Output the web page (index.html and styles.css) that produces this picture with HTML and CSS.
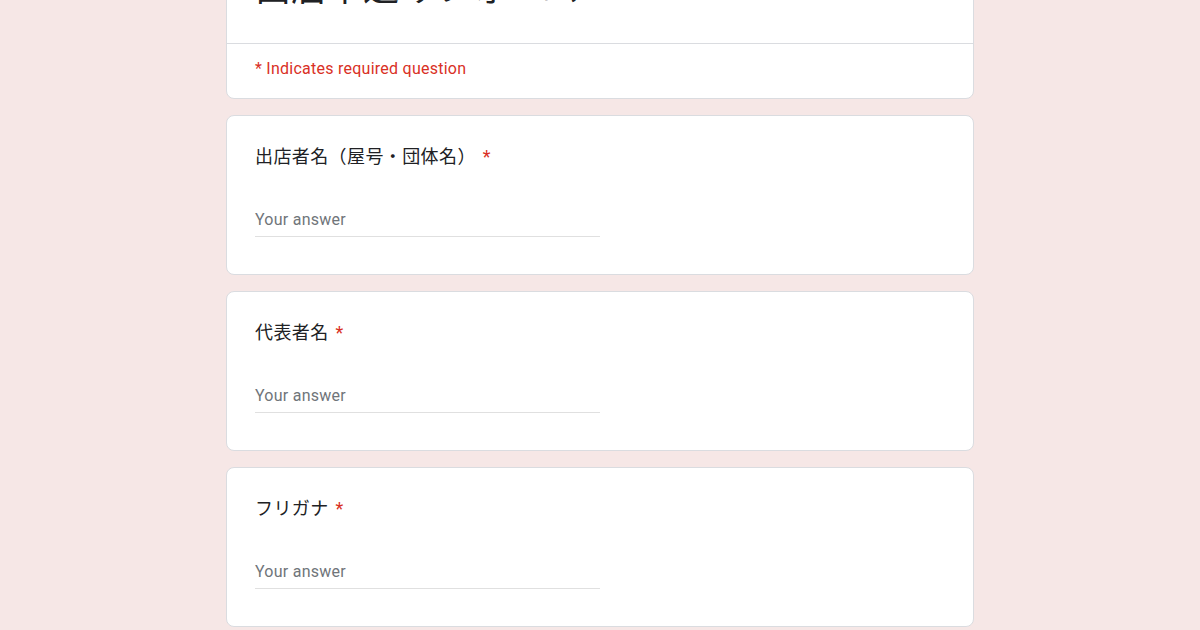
FILE: index.html
```html
<!DOCTYPE html>
<html lang="ja">
<head>
<meta charset="utf-8">
<title>出店申込みフォーム</title>
<link rel="stylesheet" href="styles.css">
</head>
<body>
<main class="form">
  <section class="card header-card">
    <div class="header-top">
      <h1 class="form-title">出店申込みフォーム</h1>
    </div>
    <div class="required-note">* Indicates required question</div>
  </section>

  <section class="card question">
    <div class="q-title">出店者名（屋号・団体名） <span class="req">*</span></div>
    <div class="answer">Your answer</div>
  </section>

  <section class="card question">
    <div class="q-title">代表者名 <span class="req">*</span></div>
    <div class="answer">Your answer</div>
  </section>

  <section class="card question">
    <div class="q-title">フリガナ <span class="req">*</span></div>
    <div class="answer">Your answer</div>
  </section>
</main>
</body>
</html>
```

FILE: styles.css
```css
html, body {
  margin: 0;
  padding: 0;
}
body {
  background: #f6e7e6;
  font-family: Roboto, "Noto Sans CJK JP", "Noto Sans", sans-serif;
  color: #202124;
  overflow: hidden;
}
.form {
  width: 748px;
  margin: -60px auto 0;
  display: flex;
  flex-direction: column;
  gap: 16px;
}
.card {
  background: #fff;
  border: 1px solid #dadce0;
  border-radius: 8px;
  box-sizing: border-box;
}
.header-top {
  padding: 28px 28px 34px;
  border-bottom: 1px solid #dadce0;
}
.form-title {
  margin: 0;
  font-size: 36px;
  line-height: 40px;
  font-weight: 400;
  color: #202124;
}
.required-note {
  padding: 14px 28px 18px;
  font-size: 16px;
  line-height: 22px;
  letter-spacing: 0.25px;
  color: #d93025;
}
.question {
  padding: 28px 28px 0;
  height: 160px;
}
.q-title {
  font-size: 18px;
  line-height: 26px;
  letter-spacing: 0.4px;
  color: #202124;
}
.req {
  margin-left: 2px;
  color: #d93025;
}
.answer {
  margin-top: 31px;
  width: 345px;
  padding: 8px 0 5px;
  font-size: 16px;
  line-height: 22px;
  letter-spacing: 0.25px;
  color: #70757a;
  border-bottom: 1px solid #e0e0e0;
}
```
